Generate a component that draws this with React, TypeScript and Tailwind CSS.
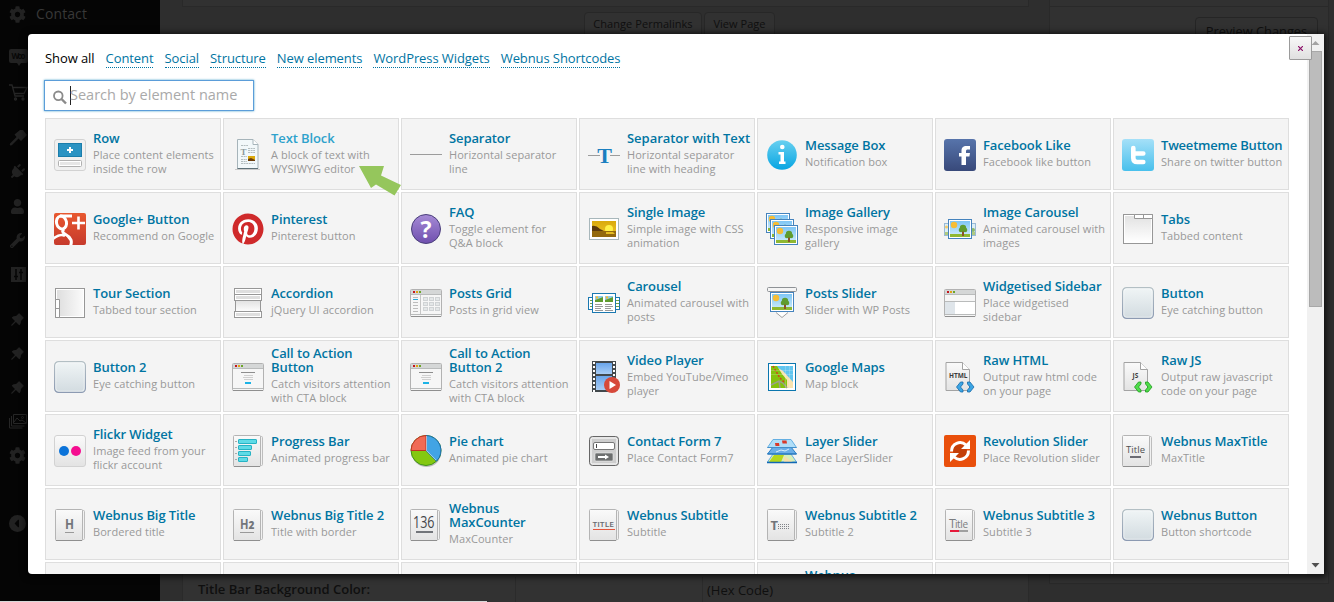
import React from "react";
import { FaCog, FaPlug, FaUser, FaWrench, FaPinterest, FaCaretLeft } from "react-icons/fa";
import { AiFillPushpin } from "react-icons/ai";

function Svg({ children }: { children?: React.ReactNode }) {
  return (
    <svg width="32" height="32" viewBox="0 0 32 32" className="block shrink-0" fontFamily="Open Sans, sans-serif">
      {children}
    </svg>
  );
}

function Defs() {
  return (
    <svg width="0" height="0" className="absolute">
      <defs>
        <linearGradient id="gGray" x1="0" y1="0" x2="0" y2="1"><stop offset="0" stopColor="#fafafa" /><stop offset="1" stopColor="#e3e3e3" /></linearGradient>
        <linearGradient id="gGrayUp" x1="0" y1="0" x2="0" y2="1"><stop offset="0" stopColor="#e2e2e2" /><stop offset="1" stopColor="#ffffff" /></linearGradient>
        <linearGradient id="gSide" x1="0" y1="0" x2="1" y2="0"><stop offset="0" stopColor="#dedede" /><stop offset="1" stopColor="#fafafa" /></linearGradient>
        <linearGradient id="gInfo" x1="0" y1="0" x2="0" y2="1"><stop offset="0" stopColor="#68d0f0" /><stop offset="1" stopColor="#07a5e2" /></linearGradient>
        <linearGradient id="gFb" x1="0" y1="0" x2="0" y2="1"><stop offset="0" stopColor="#5774ab" /><stop offset="1" stopColor="#38497a" /></linearGradient>
        <linearGradient id="gTw" x1="0" y1="0" x2="0" y2="1"><stop offset="0" stopColor="#a5e0f8" /><stop offset="1" stopColor="#48c0ec" /></linearGradient>
        <linearGradient id="gGp" x1="0" y1="0" x2="0" y2="1"><stop offset="0" stopColor="#e8582f" /><stop offset="1" stopColor="#c63a2c" /></linearGradient>
        <linearGradient id="gPu" x1="0" y1="0" x2="0" y2="1"><stop offset="0" stopColor="#a68bd6" /><stop offset="1" stopColor="#6f4fae" /></linearGradient>
        <linearGradient id="gBtn" x1="0" y1="0" x2="0" y2="1"><stop offset="0" stopColor="#f0f5f6" /><stop offset="1" stopColor="#d2dbe0" /></linearGradient>
        <linearGradient id="gBtnLine" x1="0" y1="0" x2="0" y2="1"><stop offset="0" stopColor="#b3bfc4" /><stop offset="1" stopColor="#8c9ab2" /></linearGradient>
        <linearGradient id="gSky" x1="0" y1="0" x2="0" y2="1"><stop offset="0" stopColor="#7fc6f5" /><stop offset="1" stopColor="#d3eefb" /></linearGradient>
        <linearGradient id="gFilm" x1="0" y1="0" x2="0" y2="1"><stop offset="0" stopColor="#6aa5ea" /><stop offset="1" stopColor="#a9cdf5" /></linearGradient>
        <linearGradient id="gSun" x1="0" y1="0" x2="0" y2="1"><stop offset="0" stopColor="#d9a90c" /><stop offset="1" stopColor="#f0c92a" /></linearGradient>
      </defs>
    </svg>
  );
}

function Frame({ x, y }: { x: number; y: number }) {
  return (
    <g transform={`translate(${x} ${y})`}>
      <rect x="0.5" y="0.5" width="23" height="19" fill="#fff" stroke="#4583bd" />
      <rect x="2" y="2" width="20" height="16" fill="url(#gSky)" />
      <rect x="2" y="15" width="20" height="3" fill="#8fb832" />
      <circle cx="6" cy="6" r="3.2" fill="#f6bd36" />
      <rect x="14" y="12" width="2" height="5" fill="#8a5427" />
      <circle cx="15" cy="9" r="3.2" fill="#5f9c2f" />
      <circle cx="12.9" cy="11" r="2.2" fill="#5f9c2f" />
      <circle cx="17.1" cy="11" r="2.2" fill="#5f9c2f" />
    </g>
  );
}

function Paper({ x = 1, children }: { x?: number; children?: React.ReactNode }) {
  return (
    <Svg>
      <g transform={`translate(${x} 0)`}>
        <rect x="4" y="1.5" width="25.5" height="29" rx="1" fill="#f1f1f1" stroke="#bdbdbd" />
        <rect x="0.5" y="0.5" width="27" height="31" rx="1" fill="url(#gGray)" stroke="#b4b4b4" />
        <path d="M1 31.5h26" stroke="#8f8f8f" />
      </g>
      {children}
    </Svg>
  );
}

function Win({ children }: { children?: React.ReactNode }) {
  return (
    <Svg>
      <rect x="0.5" y="2.5" width="31" height="27" rx="1" fill="#f6f6f6" stroke="#b2b2b2" />
      <rect x="1" y="3" width="30" height="4" fill="#d5d7d7" />
      <rect x="3" y="4" width="2" height="2" fill="#c4161c" />
      <rect x="6" y="4" width="2" height="2" fill="#e1a413" />
      <rect x="9" y="4" width="2" height="2" fill="#6da629" />
      <path d="M1 7.5h30M1 27.5h30" stroke="#b9bbbb" />
      {children}
      <path d="M1 29.5h30" stroke="#8f8f8f" />
    </Svg>
  );
}

function ButtonIcon() {
  return (
    <Svg>
      <rect x="0.6" y="0.6" width="30.8" height="30.8" rx="4" fill="url(#gBtn)" stroke="url(#gBtnLine)" strokeWidth="1.2" />
      <rect x="1.8" y="1.8" width="28.4" height="28.4" rx="3" fill="none" stroke="#fff" strokeOpacity="0.5" />
    </Svg>
  );
}

function Cta() {
  return (
    <Win>
      <path d="M9 11.5h14" stroke="#8d8d8d" />
      <path d="M12 14.5h9M11 16.5h10M12 18.5h9" stroke="#cfcfcf" />
      <rect x="13" y="21" width="6" height="2" fill="#1cb3e6" />
    </Win>
  );
}

function Code({ label, fill, stroke, x }: { label: string; fill: string; stroke: string; x: number }) {
  return (
    <Svg>
      <path d="M2 1.5h16.5l7 7v21H2z" fill="url(#gGray)" stroke="#a3a3a3" />
      <path d="M18.5 1.5v7h7" fill="#fff" stroke="#a3a3a3" />
      <text x={x} y="16.5" fontSize="6.5" fontWeight="700" fill="#3c3c3c">{label}</text>
      <path d="M16.500 21l-4 5 4 5h2.500v-2L16.500 26l2.500-3v-2z" fill={fill} stroke={stroke} strokeWidth="0.8" />
      <path d="M26 21l4 5-4 5h-2.500v-2l2.500-3-2.500-3v-2z" fill={fill} stroke={stroke} strokeWidth="0.8" />
    </Svg>
  );
}

const icons: Record<string, React.ReactNode> = {
  row: (
    <Svg>
      <rect x="0.5" y="0.5" width="31" height="31" rx="2.500" fill="#f0f0f0" stroke="#d2d2d2" />
      <rect x="4.500" y="4.500" width="23" height="13" fill="#2a93c3" stroke="#1a7dab" />
      <path d="M13 11h6M16 8v6" stroke="#fff" strokeWidth="2" />
      <rect x="4.500" y="21.500" width="23" height="6" rx="1" fill="#fff" stroke="#b0b0b0" />
      <rect x="6" y="23" width="20" height="3" fill="#e6e6e6" />
    </Svg>
  ),
  text: (
    <Svg>
      <path d="M3 30.500h25" stroke="#c9c9c9" />
      <path d="M5.500 0.500h15.500l5 5v24H5.500z" fill="#f2f8fa" stroke="#a6b4ba" />
      <path d="M21 0.500v5h5" fill="#fff" stroke="#a6b4ba" />
      <path d="M5.500 29.500H26" stroke="#5e7178" />
      <path d="M9 6.500h7M16 9.500h7M16 11.500h7M16 13.500h7M9 17.500h6M9 20.500h6M9 22.500h6M9 24.500h14" stroke="#b4bec0" strokeDasharray="2 .6" />
      <text x="8.500" y="15.500" fontSize="9" fontFamily="Liberation Serif, serif" fontWeight="700" fill="#8d999c">T</text>
      <rect x="16" y="17" width="7" height="5" fill="#dba90d" />
      <path d="M16 20l3-1 4 2v1h-7z" fill="#6c3d0b" />
    </Svg>
  ),
  sep: <Svg><path d="M0 15.500h32" stroke="#9c9c9c" /></Svg>,
  sepText: (
    <Svg>
      <path d="M0 16.500h12M22 16.500h10" stroke="#9c9c9c" />
      <text x="9.300" y="24" fontSize="22" fontFamily="Liberation Serif, serif" fontWeight="700" fill="#1b7fc0">T</text>
    </Svg>
  ),
  info: (
    <Svg>
      <circle cx="16" cy="16" r="14.800" fill="url(#gInfo)" />
      <circle cx="16.300" cy="8" r="2.300" fill="#fff" />
      <path d="M12.500 13h5.500v9.500h1.500V25h-6.500v-2.500h1.500v-7h-2z" fill="#fff" />
    </Svg>
  ),
  fb: (
    <Svg>
      <rect width="32" height="32" rx="3" fill="url(#gFb)" />
      <path d="M17.500 26V17.500H15v-3.500h2.500v-2c0-3.500 1.500-5 5-5H26v3.500h-2c-1.500 0-2 .5-2 2V14h4l-.6 3.500H22V26z" fill="#fff" />
    </Svg>
  ),
  tw: (
    <Svg>
      <rect width="32" height="32" rx="3" fill="url(#gTw)" />
      <path d="M11.300 9v10q0 4 4 4h6M11.300 14.500h10" fill="none" stroke="#fff" strokeWidth="4.600" strokeLinecap="round" />
    </Svg>
  ),
  gplus: (
    <Svg>
      <clipPath id="gpc"><rect width="32" height="32" rx="2" /></clipPath>
      <rect width="32" height="32" rx="2" fill="url(#gGp)" />
      <g clipPath="url(#gpc)" fill="none" stroke="#fff" strokeWidth="3">
        <ellipse cx="7.500" cy="9.500" rx="5" ry="6.500" transform="rotate(-12 7.500 9.500)" />
        <path d="M6 3h12M10 16q-3 3 1 5t6 6q1 3-1 7" />
        <path d="M-1 26q7-6 12-3" strokeWidth="2.500" />
        <path d="M18 10h13M24.500 3.500v13" strokeWidth="2.600" />
      </g>
    </Svg>
  ),
  pin: (
    <Svg>
      <circle cx="16" cy="16" r="14" fill="#fff" />
      <FaPinterest size={32} color="#cf2a2b" />
    </Svg>
  ),
  faq: (
    <Svg>
      <circle cx="16" cy="16" r="14.500" fill="url(#gPu)" stroke="#4a3f7a" />
      <text x="16" y="24.500" textAnchor="middle" fontSize="23" fontWeight="700" fill="#fff">?</text>
    </Svg>
  ),
  image: (
    <Svg>
      <rect x="1.500" y="5.500" width="29" height="21" fill="#fff" stroke="#a8b7bb" />
      <rect x="4" y="8" width="24" height="16" fill="url(#gSun)" />
      <circle cx="21" cy="16" r="4" fill="#fff047" />
      <path d="M4 13q4-1 8 3l4 2H4z" fill="#5b3a0c" />
      <path d="M4 18h24v6H4z" fill="#93690d" />
      <path d="M18 19h7l2 2h-9z" fill="#e5bd22" />
    </Svg>
  ),
  gallery: <Svg><Frame x={0} y={0} /><Frame x={4} y={6} /><Frame x={8} y={12} /></Svg>,
  imgCarousel: (
    <Svg>
      <g opacity="0.75">
        <rect x="0.500" y="10.500" width="31" height="12" fill="#d5ecf6" stroke="#7da7cb" />
        <path d="M1 20.500h30" stroke="#98bd58" strokeWidth="3" />
        <circle cx="2.500" cy="14" r="1.500" fill="#f6bd36" />
        <circle cx="29" cy="17" r="2" fill="#6ba43a" />
      </g>
      <Frame x={4} y={6} />
    </Svg>
  ),
  tabs: (
    <Svg>
      <rect x="1.500" y="1.500" width="29" height="29" fill="#fff" stroke="#979797" />
      <rect x="3" y="3" width="26" height="26" fill="url(#gGrayUp)" />
      <path d="M12.500 1.500h18v4h-18zM21.500 1.500v4" fill="#fff" stroke="#979797" />
    </Svg>
  ),
  tour: (
    <Svg>
      <rect x="1.500" y="1.500" width="29" height="29" fill="#fff" stroke="#979797" />
      <rect x="3" y="3" width="26" height="26" fill="url(#gSide)" />
      <path d="M1.500 12.500h4v18h-4zM1.500 21.500h4" fill="#fff" stroke="#979797" />
    </Svg>
  ),
  accordion: (
    <Svg>
      <rect x="3.500" y="13.500" width="25" height="12" fill="url(#gGrayUp)" stroke="#979797" />
      {[1.5, 7.5, 24.5].map((y) => (
        <g key={y}>
          <rect x="2.500" y={y} width="27" height="6" fill="#fff" stroke="#979797" />
          <rect x="4" y={y + 1.5} width="24" height="3" fill="#dedede" />
        </g>
      ))}
    </Svg>
  ),
  grid: (
    <Win>
      <path d="M10.500 8v19" stroke="#c5c5c5" />
      <path d="M3 10.500h5M3 15.500h5M3 18.500h5M3 21.500h5M3 24.500h5" stroke="#bcbcbc" />
      <path d="M3 12.500h5" stroke="#2ba9d8" />
      {[13, 19, 25].map((x) => [10, 15, 20].map((y) => <rect key={`${x}-${y}`} x={x + 0.5} y={y + 0.5} width="4" height="3" fill="#e4e7e8" stroke="#d0d3d5" />))}
    </Win>
  ),
  carousel: (
    <Svg>
      <rect x="0.500" y="10.500" width="31" height="12" fill="#fff" stroke="#1a78b0" />
      <path d="M2 13.500h2M2 16.500h2M2 19.500h2M28 13.500h3M28 16.500h3M28 19.500h3" stroke="#6fa345" />
      <rect x="4.500" y="6.500" width="23" height="19" fill="#fff" stroke="#1a78b0" />
      {[7, 17].map((x) => (
        <g key={x}>
          <rect x={x} y="9" width="8" height="6" fill="#8fcdf0" />
          <path d={`M${x} 15v-2l3-1 5-2v5z`} fill="#5f9c2f" />
          <circle cx={x + 2} cy="10.500" r="1.200" fill="#f6bd36" />
          <path d={`M${x} 17.500h7M${x} 19.500h8M${x} 21.500h6M${x} 23.500h8`} stroke="#9a9a9a" />
        </g>
      ))}
    </Svg>
  ),
  postSlider: (
    <Svg>
      <path d="M10 25.500l6 5 6-5" fill="#fff" stroke="#a0a0a0" />
      <Frame x={4} y={5} />
      <rect x="1.500" y="0.500" width="29" height="4" rx="1" fill="#f5f5f5" stroke="#8e9296" />
    </Svg>
  ),
  sidebar: (
    <Win>
      <path d="M1 14.500h30" stroke="#b9bbbb" />
      <rect x="1" y="15" width="10" height="12" fill="#dfe5ea" />
      <rect x="11" y="15" width="20" height="12" fill="#fff" />
    </Win>
  ),
  button: <ButtonIcon />,
  cta: <Cta />,
  video: (
    <Svg>
      <rect x="4" y="0" width="24" height="31" fill="#42484c" />
      <rect x="8" y="2" width="16" height="11" fill="url(#gFilm)" />
      <rect x="8" y="15" width="16" height="14" fill="url(#gFilm)" />
      <path d="M6 1v30M26 1v30" stroke="#fff" strokeWidth="2" strokeDasharray="2 2" />
      <circle cx="24" cy="24" r="8" fill="#d6493a" />
      <path d="M21.500 20v8l6.500-4z" fill="#fff" />
    </Svg>
  ),
  maps: (
    <Svg>
      <rect x="2.500" y="2.500" width="27" height="27" fill="#fff" stroke="#0b76ae" />
      <rect x="5" y="5" width="22" height="22" fill="#62c5ef" />
      <path d="M9 5l8 5 10 11v6H5V5z" fill="#f8e3b0" />
      <path d="M5 5h6l5 8 5 6v8H5z" fill="#84c20c" />
      <path d="M5 24l8-4 4 2 4 5M13 20l1 7" fill="none" stroke="#9a9f8a" strokeWidth="1.500" />
      <path d="M7 5l4 7 3 5 5 5" fill="none" stroke="#d4401f" strokeWidth="1.500" strokeDasharray="2 1.500" />
      <path d="M19.500 5v22M23.500 5v22M5 9.500h22M5 13.500h22" stroke="#fff" strokeOpacity="0.200" />
    </Svg>
  ),
  html: <Code label="HTML" fill="#3ba5e4" stroke="#176aa8" x={5} />,
  js: <Code label="JS" fill="#4fdc4a" stroke="#1c9a1c" x={10.5} />,
  flickr: (
    <Svg>
      <rect x="0.500" y="0.500" width="31" height="31" rx="2.500" fill="url(#gGray)" stroke="#d2d2d2" />
      <circle cx="10" cy="16" r="5" fill="#0b73d9" />
      <circle cx="22" cy="16" r="5" fill="#f50d90" />
    </Svg>
  ),
  progress: (
    <Paper>
      {[[4, 18], [10, 13], [16, 12], [22, 9]].map(([y, w]) => (
        <g key={y}>
          <rect x="6.500" y={y + 0.5} width={w} height="4" rx="0.500" fill="#5fdbe6" stroke="#27b3c4" />
          <path d={`M3 ${y + 2.5}h2`} stroke="#aaa" />
        </g>
      ))}
    </Paper>
  ),
  pie: (
    <Svg>
      <ellipse cx="16.500" cy="18" rx="14.500" ry="14" fill="#bdbdbd" />
      <circle cx="16" cy="15.500" r="15" fill="#84c810" stroke="#3f9416" />
      <path d="M16 15.500V0.500a15 15 0 0 1 10.500 25.700z" fill="#42a4e4" stroke="#1a6da8" />
      <path d="M16 15.500V0.500a15 15 0 0 0-15 15z" fill="#f06b55" stroke="#c03422" />
      <path d="M16.500 1v14.500l9.500 9.500" stroke="#e8f4fa" strokeOpacity="0.600" fill="none" />
    </Svg>
  ),
  form: (
    <Svg>
      <rect x="1.500" y="1.500" width="29" height="29" rx="3" fill="#cdcdcd" stroke="#666" />
      <rect x="3" y="3" width="26" height="26" rx="1.500" fill="none" stroke="#fff" />
      <rect x="5.500" y="7.500" width="21" height="7" rx="1.500" fill="#fff" stroke="#777" />
      <path d="M8.500 9v4" stroke="#444" />
      <rect x="7" y="18" width="18" height="8" rx="1" fill="#6c6e6e" stroke="#eee" strokeWidth="0.600" />
      <path d="M10 21h7v-1.500l4 2.500-4 2.500V23h-7z" fill="#fff" />
    </Svg>
  ),
  layer: (
    <Svg>
      <path d="M7 19h18l5.500 8h-29z" fill="#d7efb8" stroke="#69aee0" />
      <path d="M8 20h10l-3 7H3z" fill="#b5d71e" /><path d="M18 21l9 6h-9z" fill="#f6dfa8" />
      <path d="M1 27.500h30" stroke="#1168b4" strokeWidth="1.500" />
      <path d="M7 12h18l5.500 7h-29z" fill="#69aee8" stroke="#2a7fc6" />
      <path d="M10 17l5-2 4 1 4-2" stroke="#d8effc" fill="none" />
      <path d="M1.500 19h29" stroke="#2275ba" />
      <path d="M7 4.500h18l5.500 8h-29z" fill="#b0def8" stroke="#65afe2" />
      <path d="M1.500 12.500h29" stroke="#438fcb" />
      <path d="M9 8h4l.5 3h-4zM16 5.500h4.500l.5 3h-4.500z" fill="#d83a2a" />
    </Svg>
  ),
  revolution: (
    <Svg>
      <rect width="32" height="32" rx="2" fill="#e94f0b" />
      <circle cx="16" cy="16" r="7" fill="#c43f08" />
      <path d="M7.500 16.500c0-8 9-11.500 14.500-6.500M24.500 15.500c0 8-9 11.500-14.500 6.500" fill="none" stroke="#fff" strokeWidth="3" />
      <path d="M26 5v9h-9zM6 27v-9h9z" fill="#fff" />
    </Svg>
  ),
  maxTitle: (
    <Paper x={0}>
      <text x="4" y="18" fontSize="9.500" fontWeight="500" fill="#505050" textLength="19">Title</text>
      <path d="M8 22h11" stroke="#6b6b73" strokeWidth="2" />
    </Paper>
  ),
  h: (
    <Paper>
      <text x="11" y="20" fontSize="14" fontWeight="700" fill="#72757a" textLength="9" lengthAdjust="spacingAndGlyphs">H</text>
      <path d="M11 23.500h9" stroke="#999" />
    </Paper>
  ),
  h2: (
    <Paper>
      <text x="8" y="20" fontSize="14" fontWeight="700" fill="#72757a" textLength="8.500" lengthAdjust="spacingAndGlyphs">H</text>
      <text x="16.500" y="20" fontSize="10" fontWeight="800" fill="#72757a">2</text>
      <path d="M8 23.500h14" stroke="#999" />
    </Paper>
  ),
  counter: (
    <Paper x={0}>
      <text x="3" y="18.500" fontSize="16" fontWeight="500" fill="#45464a" textLength="21.500" lengthAdjust="spacingAndGlyphs">136</text>
      <path d="M6 23h17" stroke="#72757a" strokeWidth="2" />
    </Paper>
  ),
  subtitle: (
    <Paper>
      <text x="4.500" y="17.500" fontSize="7" fontWeight="600" fill="#686b70" textLength="21.500" lengthAdjust="spacingAndGlyphs">TITLE</text>
      <path d="M5 20.500h22" stroke="#e4553c" />
    </Paper>
  ),
  subtitle2: (
    <Paper>
      <text x="4.500" y="20.500" fontSize="13" fontWeight="700" fill="#72757a">T</text>
      <path d="M12 15.500h12M12 17.500h12M12 19.500h12" stroke="#808388" strokeDasharray="1 1" />
    </Paper>
  ),
  subtitle3: (
    <Paper>
      <text x="5" y="19" fontSize="12.500" fill="#7b7d80">T</text>
      <text x="11" y="19" fontSize="10" fill="#7b7d80" textLength="13">itle</text>
      <path d="M6 22h9" stroke="#e5193a" strokeWidth="2" />
      <path d="M15 22h9" stroke="#a0a0a0" strokeWidth="2" />
    </Paper>
  ),
};

const items: [string, string, string][] = [
  ["row", "Row", "Place content elements\ninside the row"],
  ["text", "Text Block", "A block of text with\nWYSIWYG editor"],
  ["sep", "Separator", "Horizontal separator\nline"],
  ["sepText", "Separator with Text", "Horizontal separator\nline with heading"],
  ["info", "Message Box", "Notification box"],
  ["fb", "Facebook Like", "Facebook like button"],
  ["tw", "Tweetmeme Button", "Share on twitter button"],
  ["gplus", "Google+ Button", "Recommend on Google"],
  ["pin", "Pinterest", "Pinterest button"],
  ["faq", "FAQ", "Toggle element for\nQ&A block"],
  ["image", "Single Image", "Simple image with CSS\nanimation"],
  ["gallery", "Image Gallery", "Responsive image\ngallery"],
  ["imgCarousel", "Image Carousel", "Animated carousel with\nimages"],
  ["tabs", "Tabs", "Tabbed content"],
  ["tour", "Tour Section", "Tabbed tour section"],
  ["accordion", "Accordion", "jQuery UI accordion"],
  ["grid", "Posts Grid", "Posts in grid view"],
  ["carousel", "Carousel", "Animated carousel with\nposts"],
  ["postSlider", "Posts Slider", "Slider with WP Posts"],
  ["sidebar", "Widgetised Sidebar", "Place widgetised\nsidebar"],
  ["button", "Button", "Eye catching button"],
  ["button", "Button 2", "Eye catching button"],
  ["cta", "Call to Action\nButton", "Catch visitors attention\nwith CTA block"],
  ["cta", "Call to Action\nButton 2", "Catch visitors attention\nwith CTA block"],
  ["video", "Video Player", "Embed YouTube/Vimeo\nplayer"],
  ["maps", "Google Maps", "Map block"],
  ["html", "Raw HTML", "Output raw html code\non your page"],
  ["js", "Raw JS", "Output raw javascript\ncode on your page"],
  ["flickr", "Flickr Widget", "Image feed from your\nflickr account"],
  ["progress", "Progress Bar", "Animated progress bar"],
  ["pie", "Pie chart", "Animated pie chart"],
  ["form", "Contact Form 7", "Place Contact Form7"],
  ["layer", "Layer Slider", "Place LayerSlider"],
  ["revolution", "Revolution Slider", "Place Revolution slider"],
  ["maxTitle", "Webnus MaxTitle", "MaxTitle"],
  ["h", "Webnus Big Title", "Bordered title"],
  ["h2", "Webnus Big Title 2", "Title with border"],
  ["counter", "Webnus\nMaxCounter", "MaxCounter"],
  ["subtitle", "Webnus Subtitle", "Subtitle"],
  ["subtitle2", "Webnus Subtitle 2", "Subtitle 2"],
  ["subtitle3", "Webnus Subtitle 3", "Subtitle 3"],
  ["button", "Webnus Button", "Button shortcode"],
];

function Card({ icon, title, desc }: { icon: string; title: string; desc: string }) {
  return (
    <div className="flex h-[72px] items-center border border-[#dedede] bg-[#f4f4f4] pl-2">
      <div className="mt-0.5 w-[39px] shrink-0">{icons[icon]}</div>
      <div className="mb-0.5 min-w-0 flex-1 whitespace-pre">
        <div className={`text-[13px] leading-[14px] font-semibold ${icon === "tw" ? "tracking-[-0.2px]" : icon === "sepText" ? "tracking-[-0.03px]" : "tracking-[-0.1px]"} ${icon === "text" ? "text-[#2ea2cc]" : "text-[#0074a2]"}`}>{title}</div>
        <div className="mt-[3px] text-[11px] leading-[14px] tracking-[0.06px] text-[#999999]">{desc}</div>
      </div>
    </div>
  );
}

const filters = ["Content", "Social", "Structure", "New elements", "WordPress Widgets", "Webnus Shortcodes"];

function Modal() {
  return (
    <div className="absolute top-[34px] left-[28px] flex h-[540px] w-[1296px] overflow-hidden rounded-l bg-white shadow-[0_1px_6px_2px_rgba(0,0,0,0.7)]">
      <div className="flex min-w-0 flex-1 flex-col">
        <div className="flex h-[46px] shrink-0 gap-[11.100px] pt-4 pl-[17px] text-[13px] leading-[17px] tracking-[-0.090px] text-[#0074a2]">
          <span className="text-black">Show all</span>
          {filters.map((f) => (
            <span key={f} className="h-[18px] border-b border-dotted border-[#0074a2]">{f}</span>
          ))}
        </div>
        <div className="ml-4 flex h-[31px] w-[210px] shrink-0 items-center border border-[#5b9dd9] bg-white pl-[7px] shadow-[0_0_2px_rgba(30,140,190,0.8)]">
          <svg width="16" height="16" viewBox="0 0 16 16" className="mt-1 shrink-0">
            <circle cx="6.300" cy="5.800" r="4.300" fill="none" stroke="#8b8b8b" strokeWidth="1.800" />
            <path d="M9.500 9l4.500 4.500" stroke="#8b8b8b" strokeWidth="2.400" />
          </svg>
          <span className="ml-0.5 h-[19px] w-px bg-[#222]" />
          <input className="-ml-px w-[176px] bg-transparent pb-px text-[14.500px] leading-5 outline-none placeholder:text-[#a9a9a9]" placeholder="Search by element name" />
        </div>
        <div className="mt-[7px] ml-[17px] grid w-[1244px] shrink-0 grid-cols-[repeat(7,176px)] gap-0.5">
          {items.map(([icon, title, desc]) => (
            <Card key={title} icon={icon} title={title} desc={desc} />
          ))}
          {[0, 1, 2, 3, 4, 5, 6].map((n) => (
            <div key={n} className="h-[72px] border border-[#dedede] bg-[#f4f4f4] pt-[5px] pl-[47px] text-[13px] leading-[14px] font-semibold tracking-[-0.1px] text-[#0074a2]">
              {n === 4 ? "Webnus" : ""}
            </div>
          ))}
        </div>
      </div>
      <div className="flex w-[17px] flex-col items-center bg-[#f1f1f1]">
        <svg width="17" height="17" viewBox="0 0 17 17"><path d="M4.500 11l4-4 4 4z" fill="#a3a3a3" /></svg>
        <div className="h-[256px] w-[13px] border border-[#a8a8a8] bg-[#bcbcbc]" />
        <div className="flex-1" />
        <svg width="17" height="17" viewBox="0 0 17 17"><path d="M4.500 6l4 4.500 4-4.500z" fill="#505050" /></svg>
      </div>
      <button className="absolute top-[2px] left-[1261px] flex h-6 w-[23px] items-center justify-center rounded-[1px] border border-[#9b9b9b] bg-linear-to-b from-[#f8f8f8] to-[#e0e0e0]">
        <svg width="5" height="5" viewBox="0 0 5 5"><path d="M0 0l5 5M5 0l-5 5" stroke="#8b1068" strokeWidth="1.200" /></svg>
      </button>
      <svg className="absolute top-[130px] left-[330px]" width="44" height="33" viewBox="0 0 44 33">
        <path d="M1 2h25l-3 9.500 20 9.500-6.500 10.500L18 20.500 13 24z" fill="#95c65c" />
      </svg>
    </div>
  );
}

function SideRow({ h, children }: { h: string; children?: React.ReactNode }) {
  return <div className={`flex shrink-0 items-center pl-[9px] ${h}`}>{children}</div>;
}

function Sidebar() {
  return (
    <aside className="flex w-[160px] shrink-0 flex-col bg-[#050505] text-[#222222]">
      <SideRow h="h-7"><FaCog size={17} /><span className="mb-0.5 ml-[10px] text-[14px] tracking-[0.1px] text-[#383838]">Contact</span></SideRow>
      <div className="h-3" />
      <SideRow h="h-[35px]">
        <svg width="19" height="19" viewBox="0 0 19 19">
          <path d="M2 1h15q2 0 2 2v10q0 2-2 2h-5l-2 3-2-3H2q-2 0-2-2V3q0-2 2-2z" fill="#222" />
          <text x="2.500" y="11" fontSize="8" fontWeight="700" fill="#080808" textLength="14">Woo</text>
        </svg>
      </SideRow>
      <SideRow h="h-[35px]">
        <svg width="19" height="19" viewBox="0 0 19 19" fill="none" stroke="#262626" strokeWidth="1.300">
          <path d="M0 2h3l3 11h9M4 4.500h14l-3 6H6" /><circle cx="6.500" cy="16" r="1" /><circle cx="14" cy="16" r="1" />
        </svg>
      </SideRow>
      <div className="h-[11px]" />
      <SideRow h="h-[34px]">
        <svg width="18" height="18" viewBox="0 0 18 18" fill="#222"><path d="M11 1l3 0 4 5-6 6-2.500-2.500L3 16q-3 1.500-2-1.500L7.500 8 5.500 5.500z" /></svg>
      </SideRow>
      <SideRow h="h-[34px]"><FaPlug size={16} className="rotate-45" /></SideRow>
      <SideRow h="h-[34px]"><FaUser size={15} className="ml-px" /></SideRow>
      <SideRow h="h-[34px]"><FaWrench size={15} className="ml-px" /></SideRow>
      <SideRow h="h-[34px]">
        <svg width="15" height="15" viewBox="0 0 15 15" className="ml-0.5"><rect width="15" height="15" fill="#222" /><path d="M5 2v11M10 2v11M3 9.500h4M8 5.500h4" stroke="#050505" strokeWidth="1.500" /></svg>
      </SideRow>
      <div className="h-[11px]" />
      <SideRow h="h-[34px]"><AiFillPushpin size={17} /></SideRow>
      <SideRow h="h-[34px]"><AiFillPushpin size={17} /></SideRow>
      <SideRow h="h-[34px]"><AiFillPushpin size={17} /></SideRow>
      <SideRow h="h-[34px]">
        <svg width="18" height="16" viewBox="0 0 18 16" fill="none" stroke="#262626"><path d="M4.500 1.500h13v9h-13zM2.500 3v10h13M.5 5v10h13M5 9l3-4 3 3 2-1 4 3" /><circle cx="13.500" cy="4.500" r="1" /></svg>
      </SideRow>
      <SideRow h="h-[34px]"><FaCog size={17} /></SideRow>
      <div className="h-[34px]" />
      <SideRow h="h-[34px]">
        <span className="flex size-[17px] items-center justify-center rounded-full bg-[#222222]"><FaCaretLeft size={13} color="#050505" className="-ml-0.5" /></span>
      </SideRow>
    </aside>
  );
}

export default function App() {
  return (
    <div className="relative flex h-[602px] w-[1334px] overflow-hidden bg-[#2e2e2e] font-['Open_Sans',sans-serif] text-[#0f0f0f]">
      <Defs />
      <Sidebar />
      <main className="flex min-w-0 flex-1 flex-col justify-between pl-[22px]">
        <div className="flex h-[50px] items-start">
          <div className="flex w-[847px] flex-col">
            <div className="h-[7px] border border-t-0 border-[#292929] bg-[#313131]" />
            <div className="mt-[5px] ml-[402px] flex gap-0.5 text-[11px] tracking-[0.05px]">
              <div className="flex h-6 w-[118px] items-center justify-center rounded-t border border-[#272727] bg-[#313131]">Change Permalinks</div>
              <div className="flex h-6 w-[71px] items-center justify-center rounded-t border border-[#272727] bg-[#313131]">View Page</div>
            </div>
          </div>
          <div className="ml-5 flex h-[50px] w-[280px] flex-col border-x border-[#292929] bg-[#313131]">
            <div className="h-[7px] border-b border-[#292929]" />
            <div className="mt-[10px] ml-[145px] flex h-[30px] w-[123px] items-center justify-center rounded border border-[#252525] text-[12.800px]">Preview Changes</div>
          </div>
        </div>
        <div className="flex h-[30px] items-start">
          <div className="flex h-[30px] w-[847px] items-center border-x border-[#2a2a2a] bg-[#323232] pt-[5px] text-[13px]">
            <div className="w-[332px] pl-[15px] text-[13.050px] font-semibold">Title Bar Background Color:</div>
            <div className="h-full w-[188px] border-x border-[#2b2b2b]" />
            <div className="pt-0.5 pl-1">(Hex Code)</div>
          </div>
          <div className="ml-5 h-3 w-[280px] border border-t-0 border-[#292929] bg-[#313131]" />
        </div>
      </main>
      <Modal />
      <div className="absolute bottom-0 left-0 h-px w-[487px] bg-[#d8d8d8]" />
    </div>
  );
}
